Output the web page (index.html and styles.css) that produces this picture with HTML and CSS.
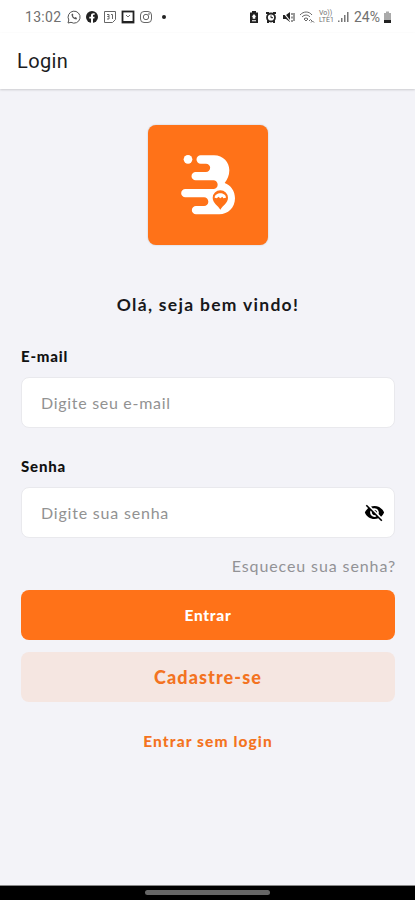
FILE: index.html
```html
<!DOCTYPE html>
<html lang="pt-BR">
<head>
  <meta charset="UTF-8" />
  <meta name="viewport" content="width=device-width, initial-scale=1.0">
  <title>Login</title>
  <link rel="stylesheet" href="styles.css">
</head>

<body>
  <div class="status">
    <span class="hora">13:02</span>
    <div class="status-apps">
      <svg viewBox="0 0 14 14" fill="none" stroke="#555"><path d="M1 13l.8-3A6 6 0 1 1 4 12.3z"/><path d="M4.5 4.2c0 3 2.3 5 5 5.3l.5-1.6-1.6-.8-.8.7-1.8-1.8.6-.9-.7-1.5z" fill="#555" stroke="none"/></svg>
      <svg viewBox="0 0 14 14"><circle cx="7" cy="7" r="6" fill="#222"/><path d="M6 13V8.600H4.300V6.700H6V5.400C6 3.600 7 2.900 9.700 3.200v1.600C8.300 4.700 8 4.900 8 5.700v1h1.600l-.3 1.900H8V13z" fill="#fff"/></svg>
      <svg viewBox="0 0 14 14" fill="none" stroke="#666"><path d="M1.500 1.500h11v8l-3 3h-8z"/><path d="M4 4.500h2v2H4.500H6v2.500H4M8 4.500h1.500V9"/></svg>
      <svg viewBox="0 0 14 14"><rect x="1.500" y="1.500" width="11" height="11" fill="none" stroke="#222" stroke-width="1.800"/><path d="M5 5l2 2 2-2" fill="none" stroke="#777"/><path d="M2 11h10v1.500H2z" fill="#222"/></svg>
      <svg viewBox="0 0 14 14" fill="none" stroke="#666"><rect x="1.500" y="1.500" width="11" height="11" rx="3.500"/><circle cx="7" cy="7" r="2.700"/><circle cx="10" cy="4" r=".4"/></svg>
    </div>
    <span class="ponto"></span>
    <div class="status-sistema">
      <svg class="i-bateria" viewBox="0 0 10 14"><path d="M3 1h4v1.500h2V13H1V2.500h2z" fill="#222"/><path d="M5 4L2.700 6.800h1v2h2.600v-2h1zM3 10.300h4v1H3z" fill="#fff"/></svg>
      <svg class="i-alarme" viewBox="0 0 12 14"><path d="M1 2h3v2H1zM8 2h3v2H8zM2 10h2v3H2zM8 10h2v3H8z" fill="#222"/><circle cx="6" cy="7.500" r="4" fill="#fff" stroke="#222" stroke-width="1.800"/><path d="M6 5.500v2.200h2" fill="none" stroke="#222"/></svg>
      <svg class="i-mudo" viewBox="0 0 13 14"><path d="M1 5h3l4-3v10L4 9H1z" fill="#222"/><path d="M1 2l8 10" stroke="#fff" stroke-width="1.200"/><path d="M10 3v2M10 6.500v2M10 10v2M12 3v8" stroke="#333"/></svg>
      <svg class="i-wifi" viewBox="0 0 16 14" fill="none" stroke="#666"><path d="M1 5c3.500-4 9-4 12 0M3 7c2.500-2.600 5.800-2.600 8 0M5 9c1.300-1.300 2.700-1.300 4 0L7 11z"/><path d="M10 11l1.500-1.500L13 11M12 12.500l1.500-1.500 1.500 1.500"/></svg>
      <span class="volte">Vo))<br>LTE1</span>
      <svg class="i-sinal" viewBox="0 0 12 14" fill="#777"><path d="M1 10.500h1.500V12H1zM4 8h1.500v4H4zM7 5h1.500v7H7zM10 2h1.500v10H10z"/></svg>
      <span class="carga">24%</span>
      <svg class="i-pilha" viewBox="0 0 9 14"><path d="M3 1.500h3V3h2v10H1V3h2z" fill="#aaa"/><path d="M1 10h7v3H1z" fill="#222"/></svg>
    </div>
  </div>

  <header class="topo">
    <h1>Login</h1>
  </header>

  <main class="container">
    <svg class="logo" viewBox="24 30 360 360">
      <path fill="#fff" d="M182 121H222C250 121 268 142 268 166C268 182 262 194 254 204C272 210 285 228 285 250C285 278 264 298 238 298H168A12.500 12.500 0 0 1 168 273H192A13 13 0 0 0 192 247H136A12.500 12.500 0 0 1 136 222H220A13 13 0 0 0 220 196H167A12.500 12.500 0 0 1 167 171H198A12 12 0 0 0 198 146H182A12.500 12.500 0 0 1 182 121Z"/>
      <circle cx="144" cy="133" r="13" fill="#fff"/>
      <path fill="#ff7218" d="M241 284C234 271 218 264 218 248A23 22 0 0 1 264 248C264 264 248 271 241 284Z"/>
      <path fill="#fff" d="M224 248C224 230 258 230 258 248L250 250L247 245L241 250L235 245L231 250Z"/>
    </svg>

    <h2 class="titulo">Olá, seja bem vindo!</h2>

    <form class="form">
      <label class="rotulo" for="email">E-mail</label>
      <div class="campo">
        <input id="email" type="email" placeholder="Digite seu e-mail">
      </div>

      <label class="rotulo" for="senha">Senha</label>
      <div class="campo">
        <input class="senha" id="senha" type="password" placeholder="Digite sua senha">
        <svg class="olho" viewBox="0 0 24 24"><path d="M12 7c2.760 0 5 2.240 5 5 0 .65-.13 1.260-.36 1.830l2.920 2.920c1.510-1.260 2.700-2.890 3.430-4.750-1.730-4.390-6-7.500-11-7.500-1.400 0-2.740.25-3.980.7l2.160 2.160C10.740 7.130 11.350 7 12 7zM2 4.270l2.280 2.280.46.46C3.080 8.300 1.780 10.020 1 12c1.730 4.390 6 7.500 11 7.500 1.550 0 3.030-.3 4.380-.84l.42.42L19.730 22 21 20.730 3.270 3 2 4.270zM7.530 9.800l1.550 1.550c-.05.21-.08.43-.08.65 0 1.660 1.340 3 3 3 .22 0 .44-.03.65-.08l1.550 1.550c-.67.33-1.410.53-2.200.53-2.760 0-5-2.240-5-5 0-.79.2-1.530.53-2.200zm4.310-.78l3.150 3.150.02-.16c0-1.660-1.340-3-3-3l-.17.01z"/></svg>
      </div>

      <a class="esqueceu" href="#">Esqueceu sua senha?</a>
      <button class="btn btn-entrar" type="button">Entrar</button>
      <button class="btn btn-cadastro" type="button">Cadastre-se</button>
      <a class="sem-login" href="#">Entrar sem login</a>
    </form>
  </main>

  <footer class="navegacao"><span></span></footer>
</body>
</html>
```
FILE: styles.css
```css
* {
  box-sizing: border-box;
}

body {
  background-color: #f3f3f8;
  font-family: Lato, sans-serif;
  margin: 0;
  height: 900px;
  display: flex;
  flex-direction: column;
  overflow: hidden;
}

.status {
  height: 33px;
  padding: 0 23px 0 25px;
  display: flex;
  align-items: center;
  background-color: #fff;
  color: #707070;
  font-family: Roboto, sans-serif;
  font-size: 14px;
}

.hora {
  width: 42px;
  letter-spacing: 0.3px;
}

.status-apps {
  display: flex;
  gap: 4px;
}

.status-apps svg {
  width: 14px;
  height: 14px;
}

.ponto {
  width: 4px;
  height: 4px;
  margin-left: 9px;
  border-radius: 50%;
  background-color: #222;
}

.status-sistema {
  display: flex;
  align-items: center;
  margin-left: auto;
}

.status-sistema svg {
  height: 14px;
}

.i-bateria {
  width: 10px;
  margin-right: 6px;
}

.i-alarme {
  width: 12px;
  margin-right: 5px;
}

.i-mudo {
  width: 13px;
  margin-right: 4px;
}

.i-wifi {
  width: 16px;
  margin-right: 4px;
}

.volte {
  width: 18px;
  font-size: 7px;
  line-height: 7px;
}

.i-sinal {
  width: 12px;
  margin-right: 5px;
}

.carga {
  width: 29px;
}

.i-pilha {
  width: 9px;
}

.topo {
  height: 56px;
  padding: 15px 17px 0;
  background-color: #fff;
  box-shadow: 0 1px 2px rgba(0, 0, 0, 0.16);
}

.topo h1 {
  margin: 0;
  color: #1c1c1e;
  font-family: Roboto, sans-serif;
  font-size: 20px;
  font-weight: 400;
  line-height: 27px;
  letter-spacing: 0.4px;
}

.container {
  flex: 1;
  padding: 36px 20px 0 21px;
}

.logo {
  display: block;
  width: 120px;
  height: 120px;
  margin: 0 auto;
  border-radius: 8px;
  background-color: #ff7218;
  box-shadow: 0 0 2px rgba(0, 0, 0, 0.2);
}

.titulo {
  margin: 48px 0 28px;
  text-align: center;
  color: #18181b;
  font-size: 17.5px;
  line-height: 24px;
  letter-spacing: 1.3px;
}

.form {
  display: flex;
  flex-direction: column;
}

.rotulo {
  margin-bottom: 10px;
  color: #111;
  font-size: 15px;
  font-weight: 900;
  line-height: 22px;
  letter-spacing: 0.8px;
}

.campo {
  display: flex;
  align-items: center;
  height: 51px;
  margin-bottom: 27px;
  padding: 0 9px 0 19px;
  border: 1px solid #e9e9ed;
  border-radius: 8px;
  background-color: #fff;
}

.campo input {
  flex: 1;
  min-width: 0;
  padding: 0;
  border: 0;
  outline: none;
  background: none;
  font-family: inherit;
  font-size: 16px;
  letter-spacing: 0.7px;
}

.campo input::placeholder {
  color: #929292;
}

.campo .senha {
  letter-spacing: 0.8px;
}

.olho {
  width: 21px;
  height: 21px;
}

.esqueceu {
  align-self: flex-end;
  margin: -10px -1px 13px 0;
  color: #929296;
  font-size: 16px;
  line-height: 22px;
  letter-spacing: 0.9px;
  text-decoration: none;
}

.btn {
  height: 50px;
  margin-bottom: 12px;
  padding: 0;
  border: 0;
  border-radius: 8px;
  font-family: inherit;
  font-weight: 900;
}

.btn-entrar {
  background-color: #ff7218;
  color: #fff;
  font-size: 15.5px;
  letter-spacing: 0.7px;
}

.btn-cadastro {
  background-color: #f5e6e1;
  color: #f37321;
  font-size: 18px;
  letter-spacing: 1.1px;
}

.sem-login {
  align-self: center;
  margin-top: 17px;
  color: #f37321;
  font-size: 15.5px;
  font-weight: 900;
  line-height: 20px;
  letter-spacing: 1.1px;
  text-decoration: none;
}

.navegacao {
  display: flex;
  justify-content: center;
  height: 15px;
  padding-top: 4px;
  border-top: 1px solid #888;
  background-color: #000;
}

.navegacao span {
  width: 125px;
  height: 5px;
  border-radius: 3px;
  background-color: #666;
}
```
